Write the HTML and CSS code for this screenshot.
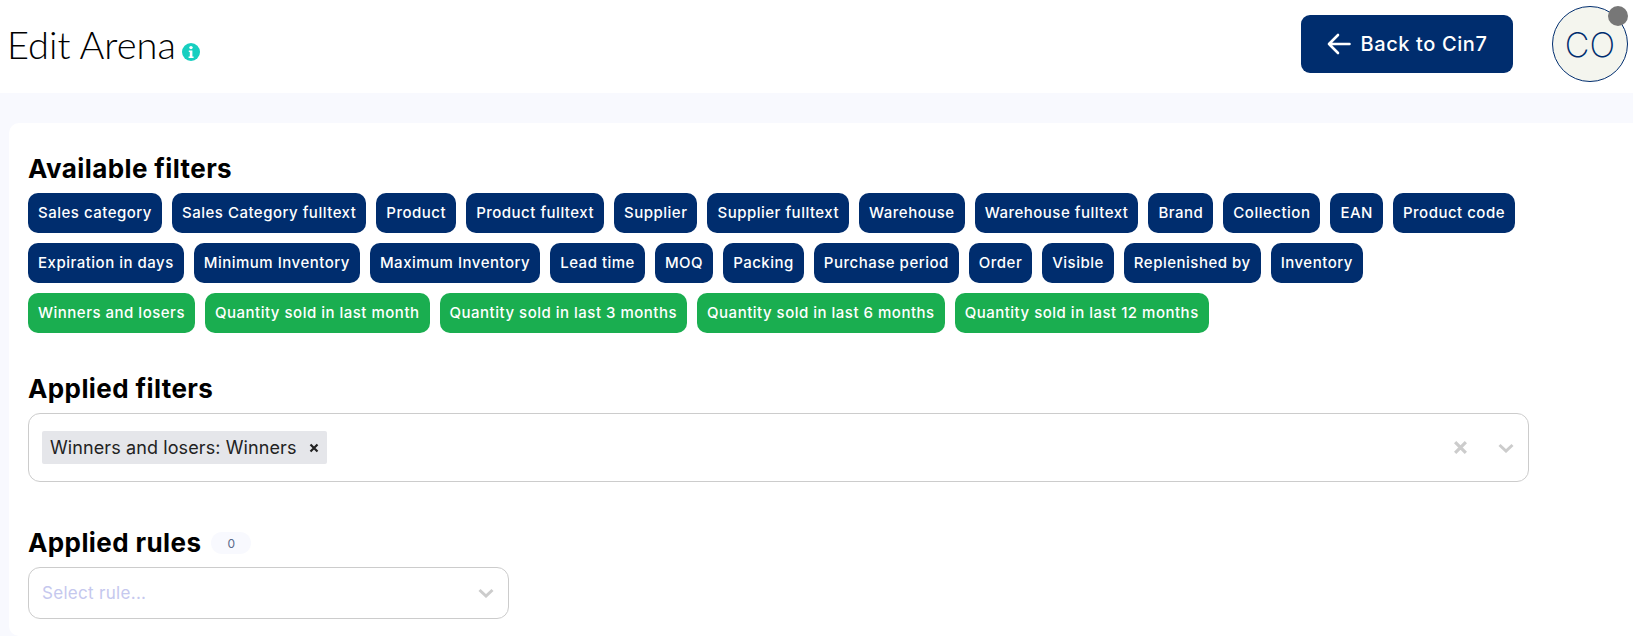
FILE: index.html
```html
<!DOCTYPE html>
<html lang="en">
<head>
    <meta charset="UTF-8">
    <meta name="viewport" content="width=device-width, initial-scale=1.0">
    <title>Edit Arena</title>
    <link rel="stylesheet" href="styles.css">
</head>
<body>
    <div class="topbar">
        <div class="title">
            <h1>Edit Arena</h1>
            <svg class="info-icon" viewBox="0 0 18 18">
                <circle cx="9" cy="9" r="9" fill="#17cfc0"/>
                <circle cx="9" cy="4.6" r="1.7" fill="#fff"/>
                <path d="M6.8 7.4h3.6v6h1.2v1.6H6.6v-1.6h1.2V9H6.8z" fill="#fff"/>
            </svg>
        </div>
        <div class="topbar-right">
            <button class="back-btn">
                <svg class="back-icon" viewBox="0 0 24 22">
                    <path d="M22.500 11H2M11 2L2 11l9 9" fill="none" stroke="#fff" stroke-width="2.600" stroke-linecap="round" stroke-linejoin="round"/>
                </svg>
                Back to Cin7
            </button>
            <div class="avatar">CO<span class="status-dot"></span></div>
        </div>
    </div>

    <div class="page">
        <div class="card">
            <h2>Available filters</h2>
            <div class="chips">
                <span class="chip">Sales category</span>
                <span class="chip">Sales Category fulltext</span>
                <span class="chip">Product</span>
                <span class="chip">Product fulltext</span>
                <span class="chip">Supplier</span>
                <span class="chip">Supplier fulltext</span>
                <span class="chip">Warehouse</span>
                <span class="chip">Warehouse fulltext</span>
                <span class="chip">Brand</span>
                <span class="chip">Collection</span>
                <span class="chip">EAN</span>
                <span class="chip">Product code</span>
                <span class="chip">Expiration in days</span>
                <span class="chip">Minimum Inventory</span>
                <span class="chip">Maximum Inventory</span>
                <span class="chip">Lead time</span>
                <span class="chip">MOQ</span>
                <span class="chip">Packing</span>
                <span class="chip">Purchase period</span>
                <span class="chip">Order</span>
                <span class="chip">Visible</span>
                <span class="chip">Replenished by</span>
                <span class="chip">Inventory</span>
                <span class="chip green">Winners and losers</span>
                <span class="chip green">Quantity sold in last month</span>
                <span class="chip green">Quantity sold in last 3 months</span>
                <span class="chip green">Quantity sold in last 6 months</span>
                <span class="chip green">Quantity sold in last 12 months</span>
            </div>

            <h2 class="applied-filters">Applied filters</h2>
            <div class="select select-wide">
                <div class="tag">
                    <span>Winners and losers: Winners</span>
                    <svg class="tag-x" viewBox="0 0 10 10">
                        <path d="M1.500 1.500l7 7M8.500 1.500l-7 7" stroke="#222" stroke-width="2.200" fill="none"/>
                    </svg>
                </div>
                <div class="select-icons">
                    <svg class="clear-icon" viewBox="0 0 14 14">
                        <path d="M2 2l10 10M12 2L2 12" stroke="#ccc" stroke-width="3" fill="none"/>
                    </svg>
                    <svg class="chevron" viewBox="0 0 16 10">
                        <path d="M1.500 2l6.500 6 6.500-6" stroke="#ccc" stroke-width="3" fill="none"/>
                    </svg>
                </div>
            </div>

            <div class="rules-head">
                <h2>Applied rules</h2>
                <span class="count">0</span>
            </div>
            <div class="select select-small">
                <span class="placeholder">Select rule...</span>
                <div class="select-icons">
                    <svg class="chevron" viewBox="0 0 16 10">
                        <path d="M1.500 2l6.500 6 6.500-6" stroke="#ccc" stroke-width="3" fill="none"/>
                    </svg>
                </div>
            </div>
        </div>
    </div>
</body>
</html>
```
FILE: styles.css
```css
* {
    box-sizing: border-box;
}
html, body {
    height: 100%;
}
body {
    font-family: Inter, "Noto Sans", sans-serif;
    background-color: #f8f9fe;
    color: #000;
    margin: 0;
    overflow: hidden;
    display: flex;
    flex-direction: column;
}
.topbar {
    background-color: #fff;
    height: 93px;
    flex-shrink: 0;
    display: flex;
    justify-content: space-between;
    align-items: center;
    padding: 0 5px 5px 7px;
}
.title {
    display: flex;
    align-items: center;
    gap: 6px;
}
.title h1 {
    font-family: Lato, sans-serif;
    font-size: 38px;
    font-weight: 300;
    margin: 0;
}
.info-icon {
    width: 18px;
    height: 18px;
    margin-top: 15px;
}
.topbar-right {
    display: flex;
    align-items: center;
    gap: 39px;
}
.back-btn {
    font-family: inherit;
    font-size: 20px;
    font-weight: 500;
    letter-spacing: 0.6px;
    color: #fff;
    background-color: #002d6e;
    border: none;
    border-radius: 9px;
    width: 212px;
    height: 58px;
    display: flex;
    align-items: center;
    justify-content: center;
    gap: 10px;
}
.back-icon {
    width: 24px;
    height: 22px;
}
.avatar {
    position: relative;
    width: 76px;
    height: 76px;
    border-radius: 50%;
    border: 1px solid #002d6e;
    background-color: #f4f5ee;
    color: #002d6e;
    font-size: 34px;
    font-weight: 200;
    display: flex;
    align-items: center;
    justify-content: center;
}
.status-dot {
    position: absolute;
    top: -1px;
    right: -1px;
    width: 20px;
    height: 20px;
    border-radius: 50%;
    background-color: #777;
}
.page {
    flex: 1;
    padding: 30px 0 0 9px;
    display: flex;
}
.card {
    flex: 1;
    background-color: #fff;
    border-radius: 10px 0 0 10px;
    padding: 31px 19px 0;
}
h2 {
    font-size: 26px;
    font-weight: 700;
    letter-spacing: 0.4px;
    line-height: 30px;
    margin: 0;
}
.chips {
    display: flex;
    flex-wrap: wrap;
    gap: 10px;
    margin-top: 9px;
    max-width: 1500px;
}
.chip {
    background-color: #002d6e;
    color: #fff;
    font-size: 15px;
    font-weight: 500;
    letter-spacing: 0.5px;
    height: 40px;
    line-height: 40px;
    padding: 0 10px;
    border-radius: 10px;
}
.chip.green {
    background-color: #1aae50;
}
.applied-filters {
    margin-top: 41px;
}
.select {
    border: 1px solid #ccc;
    border-radius: 12px;
    display: flex;
    align-items: center;
    justify-content: space-between;
    background-color: #fff;
}
.select-wide {
    width: 1501px;
    height: 69px;
    margin-top: 9px;
    padding: 0 14px 0 13px;
}
.select-small {
    width: 481px;
    height: 52px;
    margin-top: 9px;
    padding: 0 14px 0 13px;
}
.tag {
    background-color: #e5e6ea;
    border-radius: 2px;
    height: 33px;
    display: flex;
    align-items: center;
    gap: 12px;
    padding: 0 8px;
    font-size: 18px;
    letter-spacing: 0.1px;
    color: #222;
}
.tag-x {
    width: 10px;
    height: 10px;
}
.select-icons {
    display: flex;
    align-items: center;
    gap: 30px;
}
.clear-icon {
    width: 15px;
    height: 15px;
}
.chevron {
    width: 16px;
    height: 10px;
}
.rules-head {
    display: flex;
    align-items: center;
    gap: 10px;
    margin-top: 46px;
}
.count {
    width: 40px;
    height: 22px;
    border-radius: 11px;
    background-color: #f8f9fe;
    color: #5a6a8a;
    font-size: 12px;
    display: flex;
    align-items: center;
    justify-content: center;
}
.placeholder {
    color: #c5c8ee;
    font-size: 17px;
    letter-spacing: 0.3px;
}
```
